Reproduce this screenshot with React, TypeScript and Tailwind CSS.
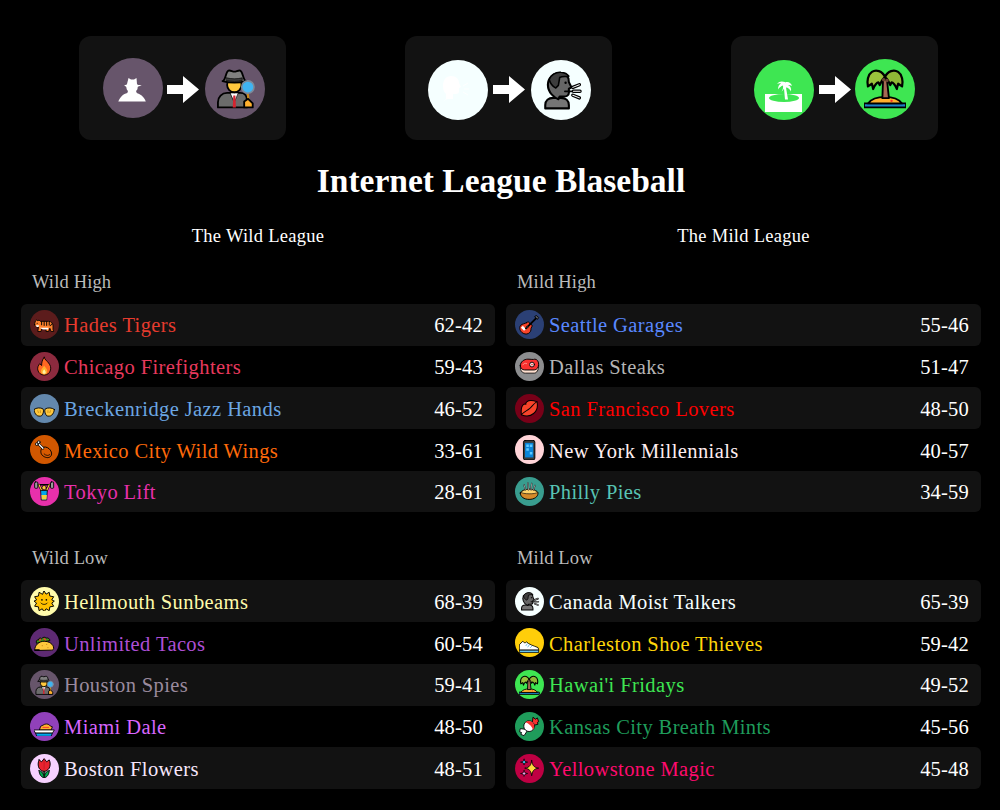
import { ReactNode } from 'react';

const ink = { stroke: '#000', strokeWidth: 1.4, strokeLinejoin: 'round' as const, strokeLinecap: 'round' as const };

const icons: Record<string, ReactNode> = {
    detective: (
        <g {...ink}>
            <path d="M3 30v-4c0-4 3-7 7-7h10c3 0 5 2 5 5v6z" fill="#6b6b6b" />
            <path d="M12.500 19h6l-3 7z" fill="#fff" strokeWidth="0.5" />
            <path d="M14.700 21h1.600l.4 9h-2.400z" fill="#d6232f" stroke="none" />
            <circle cx="15.500" cy="13" r="5.500" fill="#ffc83d" />
            <path d="M6.500 10c2.500-.8 2.300-7 4.500-8 1.500-.5 3 .8 4.500.8s3-1.300 4.500-.8c2.200 1 2 7.200 4.500 8-5 1.500-13 1.500-18 0z" fill="#808080" />
            <path d="M9.500 7.500c4 1 8 1 12 0v2c-4 1-8 1-12 0z" fill="#3d3d3d" strokeWidth="0.5" />
            <path d="M25.500 18l.8 6" fill="none" stroke="#c98a1b" strokeWidth="1.600" />
            <circle cx="25.800" cy="14.500" r="4.700" fill="#3fb4f2" stroke="#7d8a99" strokeWidth="1.200" />
            <path d="M23 30v-4.500l3-2 3.500 3.500v3z" fill="#ffb02e" />
        </g>
    ),
    speaking: (
        <g {...ink}>
            <path d="M4 30v-2.500c0-3.500 2.500-5.500 6-5.500h6c3.500 0 6 2 6 5.500v2.500z" fill="#757575" strokeWidth="1.600" />
            <path d="M6 12c0-5 4-9 9-9 5 0 7 3 7 7l2 4-2 1v3c0 2-2 3-4 3h-3l-1 2c-3-1-8-5-8-11z" fill="#666" strokeWidth="1.600" />
            <path d="M7 8c1-3 5-6 9-5.500 3 .3 5 1.500 6 3-3 .5-5 0-7 1l-1 6-2 2c-2-1-4-3-5-6.500z" fill="#3d3d3d" strokeWidth="1.200" />
            <circle cx="19.500" cy="10.500" r="0.900" fill="#000" stroke="none" />
            <path d="M19 17h6" fill="none" />
            <path d="M25 14l5-2M25.500 17h5M25 20l5 2" fill="none" strokeWidth="2.600" />
            <path d="M25 14l5-2M25.500 17h5M25 20l5 2" fill="none" stroke="#fff" strokeWidth="0.800" />
        </g>
    ),
    island: (
        <g {...ink}>
            <path d="M0 30v-3h32v3z" fill="#1c7fc4" />
            <path d="M3 27c3-4 7-5 13-5s10 1 13 5z" fill="#ffb02e" />
            <circle cx="21" cy="25" r="0.900" fill="#f8312f" stroke="none" />
            <path d="M14.500 9h3l1.500 14h-5z" fill="#a56953" />
            <path d="M16 7c-2-5-7-6-10-4-3 2-4 7-3 11l3-2 1 4c1-3 3-5 4-5l1 2c1-2 2-5 4-6z" fill="#9ac23c" strokeWidth="1.700" />
            <path d="M16 7c2-5 7-6 10-4 3 2 4 7 3 11l-3-2-1 4c-1-3-3-5-4-5l-1 2c-1-2-2-5-4-6z" fill="#8fb736" strokeWidth="1.700" />
            <circle cx="15" cy="9" r="1.300" fill="#6d4534" stroke="none" />
            <circle cx="17.500" cy="9.500" r="1.300" fill="#6d4534" stroke="none" />
        </g>
    ),
    tiger: (
        <g {...ink}>
            <path d="M1 15c0-3 1-6 3-7l2 1 2-1 2 2h13c4 0 7 3 7 7v6l1 3h-4l-2-5-2 5h-4v-4h-7l-1 4H6l1-7c-3 0-6-1-6-4z" fill="#ff822d" />
            <path d="M9 20h14l-1 3h-8z" fill="#fff" stroke="none" />
            <path d="M3 16h5l-1 3H4z" fill="#fff" stroke="none" />
            <path d="M12 10.500v5M16 10.500v6M20 10.500v6M24 11v5M28 14l-2 3" fill="none" strokeWidth="1.500" />
            <circle cx="5" cy="13" r="0.900" fill="#000" stroke="none" />
        </g>
    ),
    fire: (
        <g {...ink}>
            <path d="M16 2c1 4 4 5 7 9 3 4 4 7 3 11-1 5-5 8-10 8S7 27 6 22c-1-4 1-7 3-10l3 3c0-5 1-9 4-13z" fill="#ff6723" />
            <path d="M16 15c1 3 5 5 5 9 0 3-2 5-5 5s-5-2-5-5c0-4 4-6 5-9z" fill="#ffb02e" stroke="none" />
            <path d="M16 21c1 2 2.500 3 2.500 4.500S17.500 28 16 28s-2.500-1-2.500-2.500S15 23 16 21z" fill="#fff3a0" stroke="none" />
        </g>
    ),
    hands: (
        <g {...ink}>
            <path d="M0 18c4-3 10-3 14-1 2 2 1 8-2 11-2 1-6 1-8-1-2-2-4-5-4-9z" fill="#ffc83d" />
            <path d="M32 18c-4-3-10-3-14-1-2 2-1 8 2 11 2 1 6 1 8-1 2-2 4-5 4-9z" fill="#ffc83d" />
            <path d="M6 20l1 3M10 20v3M22 20v3M26 20l-1 3" fill="none" stroke="#a86d00" strokeWidth="0.900" />
        </g>
    ),
    leg: (
        <g {...ink}>
            <path d="M13 12c3-2 8-1 11 2 4 4 5 9 2 12s-9 2-13-2c-3-3-3-9 0-12z" fill="#d95a00" strokeWidth="1.500" />
            <path d="M14 13L7 6" strokeWidth="4" fill="none" />
            <path d="M14 13L7 6" stroke="#fff" strokeWidth="2.200" fill="none" />
            <circle cx="4.500" cy="6.500" r="2.200" fill="#fff" />
            <circle cx="7.500" cy="3.500" r="2.200" fill="#fff" />
            <path d="M16 22c3 3 7 3 9 1" fill="none" strokeWidth="1.200" />
        </g>
    ),
    lifter: (
        <g {...ink}>
            <path d="M6 6h20" fill="none" strokeWidth="2.500" />
            <rect x="1" y="1.500" width="5" height="10" rx="1.500" fill="#9b9b9b" />
            <rect x="26" y="1.500" width="5" height="10" rx="1.500" fill="#9b9b9b" />
            <path d="M8 6l4 9M24 6l-4 9" fill="none" strokeWidth="3.400" />
            <path d="M8 6l4 9M24 6l-4 9" fill="none" stroke="#ffc83d" strokeWidth="1.800" />
            <path d="M11 15h10l-1 15h-8z" fill="#00a6ed" strokeWidth="1.200" />
            <path d="M11.700 22h8.600l-.5 7h-7.500z" fill="#f4d03f" stroke="none" />
            <circle cx="16" cy="10.500" r="3.500" fill="#ffc83d" strokeWidth="1.200" />
        </g>
    ),
    guitar: (
        <g {...ink}>
            <path d="M12 12c2-2 5-1 5 2 3 0 5 3 3 5l-1 2c0 4-1 6-4 8-3 2-8 1-11-2-3-3-4-8-1-11 2-2 6-2 9-4z" fill="#f8442a" strokeWidth="1.500" />
            <path d="M6 17l5 5-3 3-5-5z" fill="#fff" stroke="none" />
            <path d="M11 21L26 6" strokeWidth="3" fill="none" />
            <path d="M25 3l4 4 2-3-3-3z" fill="#555" />
            <circle cx="13" cy="19" r="2" fill="#222" stroke="none" />
        </g>
    ),
    steak: (
        <g {...ink}>
            <path d="M2 17c0 6 3 10 8 10h14c4 0 7-5 7-12l-2-2H3z" fill="#ffe0d0" strokeWidth="1.300" />
            <path d="M2 15c0-6 6-10 12-10 5 0 8 1 11 0 3 0 6 3 6 8 0 5-3 9-7 9H9c-4 0-7-3-7-7z" fill="#f8312f" strokeWidth="1.500" />
            <circle cx="20.500" cy="13.500" r="3.800" fill="#ffe0e0" />
            <circle cx="20.500" cy="13.500" r="1.300" fill="#f8312f" stroke="none" />
            <path d="M6 14c2-3 4-3 6-2" fill="none" stroke="#ffb0a0" strokeWidth="1.200" />
        </g>
    ),
    lips: (
        <g {...ink} transform="rotate(-40 16 16)">
            <path d="M0 16C4 10 9 6 12.500 6 14 6 15.500 7 16 8 16.500 7 18 6 19.500 6 23 6 28 10 32 16 28 24 22 27 16 27 10 27 4 24 0 16z" fill="#f8442a" strokeWidth="1.600" />
            <path d="M0 16c7-1 11 1 16 1s9-2 16-1" fill="none" strokeWidth="1.500" />
        </g>
    ),
    phone: (
        <g {...ink}>
            <rect x="7" y="0.500" width="18" height="31" rx="3" fill="#3b3b3b" strokeWidth="1.500" />
            <rect x="9.500" y="4.500" width="13" height="23" fill="#0a84d8" stroke="none" />
            <path d="M11.500 7h4v4h-4zM17 7h4v4h-4zM11.500 13h4v4h-4zM17 19h4v4h-4z" fill="#5ec8ff" stroke="none" />
        </g>
    ),
    pie: (
        <g {...ink}>
            <path d="M2 19c0-3 7-6 14-6s14 3 14 6c0 6-6 10-14 10S2 25 2 19z" fill="#d58a2a" strokeWidth="1.500" />
            <path d="M3 18c3 3 23 3 26 0-2-3-7-5-13-5S5 15 3 18z" fill="#ffd36b" strokeWidth="1" />
            <path d="M8 6l2 8M14 3l1 11M20 4l-1 10M25 7l-2 7" fill="none" strokeWidth="2.200" />
            <path d="M8 6l2 8M14 3l1 11M20 4l-1 10M25 7l-2 7" fill="none" stroke="#fff" strokeWidth="0.900" />
        </g>
    ),
    sun: (
        <g {...ink}>
            <path d="M16 0l3 5 5-3 1 6 6 1-3 5 4 2-4 3 3 5-6 1-1 6-5-3-3 5-3-5-5 3-1-6-6-1 3-5-4-3 4-2-3-5 6-1 1-6 5 3z" fill="#ffc000" strokeWidth="1.500" />
            <circle cx="12.500" cy="14" r="1.300" fill="#000" stroke="none" />
            <circle cx="19.500" cy="14" r="1.300" fill="#000" stroke="none" />
            <path d="M11 19c2 3 8 3 10 0" fill="none" strokeWidth="1.300" />
        </g>
    ),
    taco: (
        <g {...ink}>
            <path d="M4 16c-2-3 1-6 3-5 0-3 4-4 5-2 2-3 6-3 7-1 3-1 6 1 6 4l-20 4z" fill="#44911b" />
            <path d="M9 12l1-2M16 9l2 2" fill="none" stroke="#f8312f" strokeWidth="2" />
            <path d="M1 27c0-8 7-14 15-14s15 5 15 11c0 2-1 3-3 3z" fill="#ffc83d" strokeWidth="1.500" />
            <circle cx="13" cy="20" r="0.900" fill="#c98a1b" stroke="none" />
            <circle cx="20" cy="18" r="0.900" fill="#c98a1b" stroke="none" />
            <circle cx="22" cy="23" r="0.900" fill="#c98a1b" stroke="none" />
            <path d="M2 27h6" fill="none" strokeWidth="2.400" />
        </g>
    ),
    yacht: (
        <g {...ink} transform="translate(0 3)">
            <path d="M11 13l6-3c4-1 7 0 9 3l3 1-2 5H9z" fill="#ffb02e" strokeWidth="1.300" />
            <path d="M0 19h32l-3 5H3z" fill="#fff" strokeWidth="1.300" />
            <path d="M3 24h26l-2 5H5z" fill="#00a6ed" strokeWidth="1.300" />
            <path d="M14 15h9" fill="none" stroke="#f8312f" />
        </g>
    ),
    tulip: (
        <g {...ink}>
            <path d="M15 18h2v9h-2z" fill="#00a651" />
            <path d="M8 20c3 0 7 3 8 11-4 0-8-5-8-11zM24 20c-3 0-7 3-8 11 4 0 8-5 8-11z" fill="#00a651" />
            <path d="M8 3l4 3 4-5 4 5 4-3c2 4 2 9 0 13-2 3-5 5-8 5s-6-2-8-5c-2-4-2-9 0-13z" fill="#e8232f" strokeWidth="1.500" />
            <path d="M16 2v15" fill="none" stroke="#a81620" strokeWidth="0.800" />
        </g>
    ),
    shoe: (
        <g {...ink} transform="translate(0 3)">
            <path d="M1 15l5-5c2 3 4 3 6 1 3 4 11 6 18 9 1 2 1 3 1 4H1z" fill="#fff" strokeWidth="1.300" />
            <path d="M1 24h30v4H1z" fill="#6bc4ef" strokeWidth="1.300" />
            <path d="M13 14l-2 3M16 16l-2 3M20 18l-2 2" fill="none" stroke="#5ab4e0" strokeWidth="1.300" />
        </g>
    ),
    candy: (
        <g {...ink}>
            <path d="M21 11l1-9 4 3 3-2 2 6-2 1 1 3-8 2z" fill="#f8312f" />
            <path d="M11 21l-9-1-1 5 3 1-1 3 5 2 4-6z" fill="#fff" />
            <circle cx="16" cy="16" r="8.500" fill="#fff" />
            <path d="M10 10a8.500 8.500 0 0 1 12 12c-1-5-6-10-12-12z" fill="#f8312f" stroke="none" />
        </g>
    ),
    sparkles: (
        <g {...ink}>
            <path d="M20 4c1 7 3 11 11 12-8 1-10 5-11 12-1-7-3-11-11-12 8-1 10-5 11-12z" fill="#ffd83d" strokeWidth="1.400" />
            <path d="M8 2c.5 3 1.500 4 5.500 4.500-4 .5-5 1.500-5.500 4.500-.5-3-1.500-4-5.500-4.500C6.500 6 7.500 5 8 2z" fill="#3ec1f3" strokeWidth="1.200" />
            <path d="M8 20c.5 3 1.500 4 5.500 4.500-4 .5-5 1.500-5.500 4.500-.5-3-1.500-4-5.500-4.500 4-.5 5-1.500 5.500-4.500z" fill="#e7a6e8" strokeWidth="1.200" />
        </g>
    ),
};

const Emoji = ({ name }: { name: string }) => (
    <svg viewBox="0 0 32 32" className="h-[70%] w-[70%] shrink-0">
        {icons[name]}
    </svg>
);

// white cut-outs on the "before" side, drawn on the full 60px circle
const silhouettes = (color: string): Record<string, ReactNode> => ({
    spy: (
        <path
            transform="translate(14 14)"
            d="M11.500 6l2.500 1.500h3l2.500-1.500.5 6c0 1 2 1 4.700 1-2 1-3.500 1.500-4 2 0 2-.5 3-1.700 4l.8 2c3 1 7 3 9 8.500H1.300c2-5 5-7.500 9-8.500l.7-2c-1-1-1.500-2-1.700-4-.5-.5-1.500-1-2-2 1.500 0 2.700-.3 2.700-1z"
            fill="#fff"
        />
    ),
    head: (
        <g fill="#fff" transform="translate(10 14)">
            <path d="M5 30c0-3 3-5 6-5h4v-5h3c2 0 3-1 3-3v-3l2-1-2-4c0-4-3-7-8-7S5 6 5 12c0 4 1 6 3 8v5c-2 1-3 3-3 5z" />
            <path d="M25 12l5-3M26 15h5M25 18l5 3" stroke="#fff" strokeWidth="0.900" fill="none" />
        </g>
    ),
    isle: (
        <g fill="#fff">
            <rect x="11" y="34" width="37" height="18" />
            <ellipse cx="30" cy="38" rx="15" ry="4" fill={color} />
            <path d="M31 22c-3-1-6-1-8 2 2-1 3-1 4-.5-2 1-3 3-3 6 1.500-2 3-3.500 5-4 .5 2-.5 5-1.500 6 1-.5 2-2 2.500-3l1 11h3l-2-12c2 0 4 2 5 4 .5-3-.5-5.500-3-6.500 1 0 3 0 4 1-.5-3-4-5-7-3.500z" />
        </g>
    ),
});

const Arrow = ({ className }: { className: string }) => (
    <svg viewBox="0 0 32 27" className={`h-[27px] w-8 shrink-0 ${className}`}>
        <polygon points="0,9 16,9 16,0 32,13.500 16,27 16,18 0,18" fill="#fff" />
    </svg>
);

const Circle = ({ color, children, className }: { color: string; children: ReactNode; className: string }) => (
    <div
        className={`flex shrink-0 items-center justify-center rounded-full ${className}`}
        style={{ backgroundColor: color }}
    >
        {children}
    </div>
);

interface SwapProps {
    color: string;
    from: string;
    to: string;
    pad: string;
    fromClass: string;
    arrowClass: string;
    toClass: string;
}

const Swap = ({ color, from, to, pad, fromClass, arrowClass, toClass }: SwapProps) => (
    <div className={`flex h-[104px] w-[207px] items-center rounded-[12px] bg-[#121212] ${pad}`}>
        <Circle color={color} className={`h-[60px] w-[60px] ${fromClass}`}>
            <svg viewBox="0 0 60 60" className="h-[60px] w-[60px]">
                {silhouettes(color)[from]}
            </svg>
        </Circle>
        <Arrow className={arrowClass} />
        <Circle color={color} className={`h-[60px] w-[60px] ${toClass}`}>
            <Emoji name={to} />
        </Circle>
    </div>
);

interface Team {
    name: string;
    icon: string;
    bg: string;
    text: string;
    record: string;
}

const TeamRow = ({ team, striped }: { team: Team; striped: boolean }) => (
    <div className={`flex h-[41.7px] items-center rounded-[6px] pl-[9px] pr-3 ${striped ? 'bg-[#121212]' : ''}`}>
        <Circle color={team.bg} className="h-[29px] w-[29px]">
            <Emoji name={team.icon} />
        </Circle>
        <span className="ml-[5px] flex-1 pt-[2px] text-[20.5px] tracking-[0.4px]" style={{ color: team.text }}>
            {team.name}
        </span>
        <span className="pt-[2px] text-[20.5px] tracking-[0.2px] text-white">{team.record}</span>
    </div>
);

const Division = ({ title, teams }: { title: string; teams: Team[] }) => (
    <div>
        <h3 className="pl-[11px] text-[18.5px] leading-[24px] tracking-[0.15px] text-[#bbbbbb]">{title}</h3>
        <div className="mt-[10px]">
            {teams.map((team, i) => (
                <TeamRow key={team.name} team={team} striped={i % 2 === 0} />
            ))}
        </div>
    </div>
);

const wildHigh: Team[] = [
    { name: 'Hades Tigers', icon: 'tiger', bg: '#5c1c1c', text: '#e63b2e', record: '62-42' },
    { name: 'Chicago Firefighters', icon: 'fire', bg: '#8c2a3e', text: '#e8395d', record: '59-43' },
    { name: 'Breckenridge Jazz Hands', icon: 'hands', bg: '#6388ad', text: '#6ba6e3', record: '46-52' },
    { name: 'Mexico City Wild Wings', icon: 'leg', bg: '#d15700', text: '#ff6a0a', record: '33-61' },
    { name: 'Tokyo Lift', icon: 'lifter', bg: '#e830ab', text: '#e830ab', record: '28-61' },
];

const wildLow: Team[] = [
    { name: 'Hellmouth Sunbeams', icon: 'sun', bg: '#fffbab', text: '#fffbab', record: '68-39' },
    { name: 'Unlimited Tacos', icon: 'taco', bg: '#5e2a73', text: '#ae4fd6', record: '60-54' },
    { name: 'Houston Spies', icon: 'detective', bg: '#67556b', text: '#9a8a9e', record: '59-41' },
    { name: 'Miami Dale', icon: 'yacht', bg: '#9141ba', text: '#d966ff', record: '48-50' },
    { name: 'Boston Flowers', icon: 'tulip', bg: '#f7d1ff', text: '#f7e6fb', record: '48-51' },
];

const mildHigh: Team[] = [
    { name: 'Seattle Garages', icon: 'guitar', bg: '#2b4075', text: '#5988ff', record: '55-46' },
    { name: 'Dallas Steaks', icon: 'steak', bg: '#8c8d8f', text: '#b5b5b5', record: '51-47' },
    { name: 'San Francisco Lovers', icon: 'lips', bg: '#780018', text: '#ff0000', record: '48-50' },
    { name: 'New York Millennials', icon: 'phone', bg: '#ffd4d8', text: '#ffeef0', record: '40-57' },
    { name: 'Philly Pies', icon: 'pie', bg: '#399d8f', text: '#58c4b4', record: '34-59' },
];

const mildLow: Team[] = [
    { name: 'Canada Moist Talkers', icon: 'speaking', bg: '#f5ffff', text: '#f5ffff', record: '65-39' },
    { name: 'Charleston Shoe Thieves', icon: 'shoe', bg: '#ffce0a', text: '#ffd60a', record: '59-42' },
    { name: "Hawai'i Fridays", icon: 'island', bg: '#3ee652', text: '#3ee652', record: '49-52' },
    { name: 'Kansas City Breath Mints', icon: 'candy', bg: '#1f9c5b', text: '#1f9c5b', record: '45-56' },
    { name: 'Yellowstone Magic', icon: 'sparkles', bg: '#bf0043', text: '#ff0a6e', record: '45-48' },
];

const App = () => {
    return (
        <div className="h-[810px] w-[1000px] overflow-hidden bg-black font-['Liberation_Serif',serif] text-white">
            <div className="flex gap-[119px] pl-[79px] pt-9">
                <Swap
                    color="#67556b"
                    from="spy"
                    to="detective"
                    pad="pl-6"
                    fromClass=""
                    arrowClass="ml-1 mt-[2px]"
                    toClass="ml-[6px] mt-[2px]"
                />
                <Swap
                    color="#f5ffff"
                    from="head"
                    to="speaking"
                    pad="pl-[23px]"
                    fromClass="mt-1"
                    arrowClass="ml-[5px] mt-[2px]"
                    toClass="ml-[6px] mt-1"
                />
                <Swap
                    color="#3ee652"
                    from="isle"
                    to="island"
                    pad="pl-[23px]"
                    fromClass="mt-1"
                    arrowClass="ml-[5px] mt-[2px]"
                    toClass="ml-1 mt-[2px]"
                />
            </div>
            <h1 className="mt-[19px] pl-[2px] text-center text-[33.5px] font-bold leading-[44px]">
                Internet League Blaseball
            </h1>
            <div className="mt-[21px] grid w-[981px] grid-cols-[474px_475px] gap-x-[11px] pl-[21px]">
                <h2 className="pb-[22px] text-center text-[18.5px] leading-[24px] tracking-[0.27px]">The Wild League</h2>
                <h2 className="pb-[22px] text-center text-[18.5px] leading-[24px] tracking-[0.27px]">The Mild League</h2>
                <Division title="Wild High" teams={wildHigh} />
                <Division title="Mild High" teams={mildHigh} />
                <div className="mt-[34px]">
                    <Division title="Wild Low" teams={wildLow} />
                </div>
                <div className="mt-[34px]">
                    <Division title="Mild Low" teams={mildLow} />
                </div>
            </div>
        </div>
    );
};

export default App;
